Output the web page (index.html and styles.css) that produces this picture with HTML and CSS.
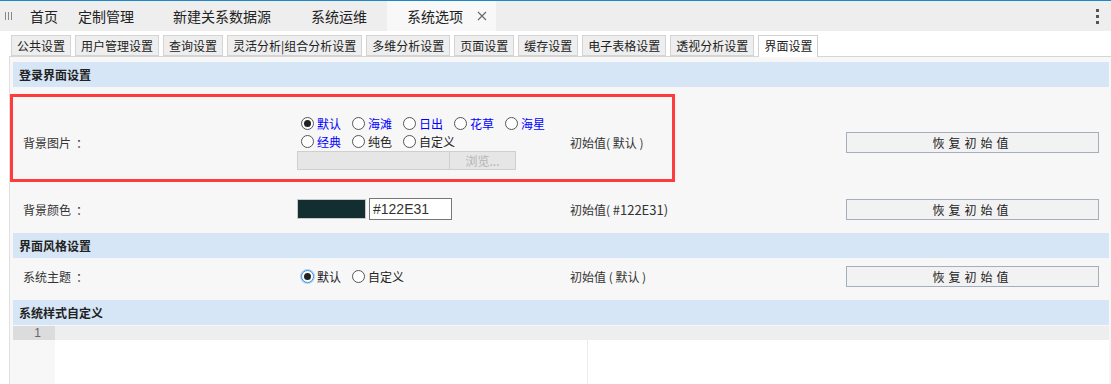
FILE: index.html
```html
<!DOCTYPE html>
<html lang="zh-CN">
<head>
    <meta charset="UTF-8">
    <meta name="viewport" content="width=device-width, initial-scale=1.0">
    <title>系统选项</title>
    <link rel="stylesheet" href="styles.css">
</head>
<body>
    <div class="tabbar">
        <span class="tab-menu"><i></i><i></i><i></i></span>
        <span class="tab fixed">首页</span>
        <span class="tab fixed">定制管理</span>
        <div class="tab-group">
            <span class="tab">新建关系数据源</span>
            <span class="tab">系统运维</span>
            <span class="tab active">系统选项
                <svg class="close" viewBox="0 0 10 10"><path d="M1 1L9 9M9 1L1 9" stroke="#666" stroke-width="1.1" fill="none"/></svg>
            </span>
        </div>
        <span class="more"><i></i><i></i><i></i></span>
    </div>

    <div class="subtabs">
        <span class="subtab">公共设置</span>
        <span class="subtab">用户管理设置</span>
        <span class="subtab">查询设置</span>
        <span class="subtab">灵活分析|组合分析设置</span>
        <span class="subtab">多维分析设置</span>
        <span class="subtab">页面设置</span>
        <span class="subtab">缓存设置</span>
        <span class="subtab">电子表格设置</span>
        <span class="subtab">透视分析设置</span>
        <span class="subtab active">界面设置</span>
    </div>

    <div class="panel">
        <div class="section-title first">登录界面设置</div>

        <div class="row row-image">
            <div class="label">背景图片<span class="colon">：</span></div>
            <div class="value">
                <div class="radio-line">
                    <label class="radio link checked"><span class="dot"></span>默认</label>
                    <label class="radio link"><span class="dot"></span>海滩</label>
                    <label class="radio link"><span class="dot"></span>日出</label>
                    <label class="radio link"><span class="dot"></span>花草</label>
                    <label class="radio link"><span class="dot"></span>海星</label>
                </div>
                <div class="radio-line">
                    <label class="radio link"><span class="dot"></span>经典</label>
                    <label class="radio"><span class="dot"></span>纯色</label>
                    <label class="radio"><span class="dot"></span>自定义</label>
                </div>
                <div class="file">
                    <span class="file-input"></span>
                    <span class="file-btn">浏览...</span>
                </div>
            </div>
            <div class="init">初始值( 默认 )</div>
            <div class="action"><button class="reset">恢复初始值</button></div>
            <div class="highlight"></div>
        </div>

        <div class="row">
            <div class="label">背景颜色<span class="colon">：</span></div>
            <div class="value color-value">
                <span class="swatch"></span>
                <span class="hex-input">#122E31</span>
            </div>
            <div class="init">初始值( <span class="num">#122E31)</span></div>
            <div class="action"><button class="reset">恢复初始值</button></div>
        </div>

        <div class="section-title">界面风格设置</div>

        <div class="row row-theme">
            <div class="label">系统主题<span class="colon">：</span></div>
            <div class="value">
                <div class="radio-line">
                    <label class="radio checked focused"><span class="dot"></span>默认</label>
                    <label class="radio"><span class="dot"></span>自定义</label>
                </div>
            </div>
            <div class="init">初始值 ( 默认 )</div>
            <div class="action"><button class="reset">恢复初始值</button></div>
        </div>

        <div class="section-title">系统样式自定义</div>

        <div class="editor">
            <div class="gutter">
                <div class="ln active">1</div>
            </div>
            <div class="code">
                <div class="line active"></div>
            </div>
        </div>
    </div>
</body>
</html>
```

FILE: styles.css
```css
* {
    box-sizing: border-box;
}

html, body {
    margin: 0;
    height: 100%;
    overflow: hidden;
}

body {
    display: flex;
    flex-direction: column;
    font-family: "Noto Sans CJK SC", "Liberation Sans", sans-serif;
    font-size: 12px;
    color: #333;
    background: #fff;
}

/* top tab bar */
.tabbar {
    display: flex;
    align-items: center;
    flex-shrink: 0;
    height: 31px;
    background: #eee;
    border-top: 1px solid #1e88c7;
    font-size: 14px;
    color: #222;
}

.tab-menu {
    display: flex;
    gap: 2px;
    width: 20px;
    height: 8px;
    padding-left: 5px;
}

.tab-menu i {
    width: 1px;
    background: #888;
}

.tab {
    display: flex;
    align-items: center;
    height: 100%;
    padding: 0 20px;
    white-space: nowrap;
}

.tab.fixed {
    padding: 0 10px;
}

.tab-group {
    display: flex;
    height: 100%;
    margin-left: 9px;
}

.tab.active {
    background: #f8f8f8;
    padding-right: 9px;
}

.close {
    width: 10px;
    height: 10px;
    margin-left: 14px;
}

.more {
    display: flex;
    flex-direction: column;
    gap: 3px;
    margin-left: auto;
    margin-right: 12px;
}

.more i {
    width: 3px;
    height: 3px;
    background: #555;
}

/* second level tabs */
.subtabs {
    display: flex;
    align-items: flex-end;
    flex-shrink: 0;
    gap: 4px;
    height: 26px;
    margin-left: 9px;
    padding-left: 2px;
    border-bottom: 1px solid #d6d6d6;
}

.subtab {
    height: 21px;
    line-height: 19px;
    padding: 0 5px;
    background: #eee;
    border: 1px solid #d4d4d4;
    color: #222;
    white-space: nowrap;
}

.subtab.active {
    height: 22px;
    margin-bottom: -1px;
    background: #fff;
    border-color: #d0d0d0;
    border-bottom: none;
}

/* settings panel */
.panel {
    display: flex;
    flex-direction: column;
    flex: 1;
    min-height: 0;
    margin-left: 9px;
    border-left: 1px solid #e0e0e0;
    background: #f7f7f7;
    padding: 0 2px 0 3px;
}

.section-title {
    flex-shrink: 0;
    height: 25px;
    line-height: 25px;
    margin-top: 10px;
    padding-left: 6px;
    background: #d6e6f6;
    font-weight: bold;
    color: #222;
}

.section-title.first {
    margin-top: 5px;
}

.row {
    position: relative;
    display: grid;
    grid-template-columns: 284px 273px 276px 253px;
    align-items: center;
    flex-shrink: 0;
    padding: 6px 0 2px;
    min-height: 32px;
}

.row-image {
    padding: 27px 0 21px;
}

.row-theme {
    padding-bottom: 1px;
}

.label {
    padding-left: 10px;
}

.colon {
    margin-left: 5px;
}

.value {
    display: flex;
    flex-direction: column;
}

.radio-line {
    display: flex;
    height: 18px;
    align-items: center;
    padding-left: 3px;
}

.radio {
    display: flex;
    align-items: center;
    margin-right: 10px;
    color: #222;
}

.radio.link {
    color: #0000ff;
}

.dot {
    width: 13px;
    height: 13px;
    margin: 0 3px 0 1px;
    border: 1px solid #555;
    border-radius: 50%;
    background: #fff;
    display: flex;
    align-items: center;
    justify-content: center;
}

.radio.checked .dot::after {
    content: "";
    width: 7px;
    height: 7px;
    border-radius: 50%;
    background: #222;
}

.radio.focused .dot {
    border-color: #3b93e0;
    box-shadow: 0 0 0 1px rgba(59, 147, 224, 0.35);
}

.file {
    display: flex;
    margin-top: 1px;
}

.file-input {
    width: 153px;
    height: 19px;
    background: #e6e6e6;
    border: 1px solid #cfcfcf;
}

.file-btn {
    width: 66px;
    height: 19px;
    line-height: 17px;
    text-align: center;
    background: #e6e6e6;
    border: 1px solid #cfcfcf;
    border-left: none;
    color: #b4b4b4;
}

.color-value {
    flex-direction: row;
    align-items: center;
}

.swatch {
    width: 69px;
    height: 20px;
    background: #122E31;
    border: 1px solid #c8c8c8;
}

.hex-input {
    width: 83px;
    height: 22px;
    margin-left: 3px;
    padding-left: 3px;
    line-height: 20px;
    background: #fff;
    border: 1px solid #777;
    font-family: "Liberation Sans", sans-serif;
    font-size: 14px;
    color: #333;
}

.init {
    color: #333;
}

.num {
    font-size: 13px;
}

.reset {
    width: 253px;
    height: 21px;
    padding: 0;
    background: #f2f2f2;
    border: 1px solid #a4afbb;
    font-family: inherit;
    font-size: 12px;
    letter-spacing: 4px;
    color: #222;
}

.highlight {
    position: absolute;
    left: -3px;
    top: 7px;
    width: 665px;
    height: 88px;
    border: 3px solid #ff3b3b;
    pointer-events: none;
}

/* style editor */
.editor {
    display: flex;
    flex: 1;
    min-height: 0;
    margin-top: 1px;
}

.gutter {
    width: 42px;
    background: #f7f7f7;
}

.ln {
    height: 14px;
    line-height: 14px;
    padding-right: 14px;
    text-align: right;
    font-family: "Liberation Sans", sans-serif;
    font-size: 12px;
    color: #666;
}

.ln.active {
    background: #dcdcdc;
}

.code {
    flex: 1;
    background: linear-gradient(to right, transparent 532px, #ececec 532px, #ececec 533px, transparent 533px), #fff;
}

.line {
    height: 14px;
}

.line.active {
    background: #eee;
}
```
